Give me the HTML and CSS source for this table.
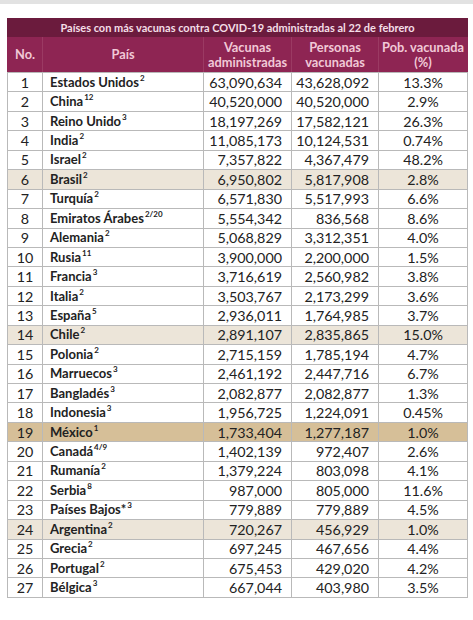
FILE: index.html
```html
<!DOCTYPE html>
<html lang="es">
<head>
<meta charset="utf-8">
<link rel="stylesheet" href="styles.css">
</head>
<body>
<div class="topband"></div>
<table class="vac">
  <colgroup>
    <col class="c-no"><col class="c-pais"><col class="c-vac"><col class="c-per"><col class="c-pob">
  </colgroup>
  <thead>
    <tr class="title"><th colspan="5">Países con más vacunas contra COVID-19 administradas al 22 de febrero</th></tr>
    <tr class="head">
      <th>No.</th><th>País</th><th>Vacunas<br>administradas</th><th>Personas<br>vacunadas</th><th>Pob. vacunada<br>(%)</th>
    </tr>
  </thead>
  <tbody>
    <tr><td class="no">1</td><td class="pais">Estados Unidos<sup>2</sup></td><td class="num">63,090,634</td><td class="num">43,628,092</td><td class="pct">13.3%</td></tr>
    <tr><td class="no">2</td><td class="pais">China<sup>12</sup></td><td class="num">40,520,000</td><td class="num">40,520,000</td><td class="pct">2.9%</td></tr>
    <tr><td class="no">3</td><td class="pais">Reino Unido<sup>3</sup></td><td class="num">18,197,269</td><td class="num">17,582,121</td><td class="pct">26.3%</td></tr>
    <tr><td class="no">4</td><td class="pais">India<sup>2</sup></td><td class="num">11,085,173</td><td class="num">10,124,531</td><td class="pct">0.74%</td></tr>
    <tr><td class="no">5</td><td class="pais">Israel<sup>2</sup></td><td class="num">7,357,822</td><td class="num">4,367,479</td><td class="pct">48.2%</td></tr>
    <tr class="hl"><td class="no">6</td><td class="pais">Brasil<sup>2</sup></td><td class="num">6,950,802</td><td class="num">5,817,908</td><td class="pct">2.8%</td></tr>
    <tr><td class="no">7</td><td class="pais">Turquía<sup>2</sup></td><td class="num">6,571,830</td><td class="num">5,517,993</td><td class="pct">6.6%</td></tr>
    <tr><td class="no">8</td><td class="pais">Emiratos Árabes<sup>2/20</sup></td><td class="num">5,554,342</td><td class="num">836,568</td><td class="pct">8.6%</td></tr>
    <tr><td class="no">9</td><td class="pais">Alemania<sup>2</sup></td><td class="num">5,068,829</td><td class="num">3,312,351</td><td class="pct">4.0%</td></tr>
    <tr><td class="no">10</td><td class="pais">Rusia<sup>11</sup></td><td class="num">3,900,000</td><td class="num">2,200,000</td><td class="pct">1.5%</td></tr>
    <tr><td class="no">11</td><td class="pais">Francia<sup>3</sup></td><td class="num">3,716,619</td><td class="num">2,560,982</td><td class="pct">3.8%</td></tr>
    <tr><td class="no">12</td><td class="pais">Italia<sup>2</sup></td><td class="num">3,503,767</td><td class="num">2,173,299</td><td class="pct">3.6%</td></tr>
    <tr><td class="no">13</td><td class="pais">España<sup>5</sup></td><td class="num">2,936,011</td><td class="num">1,764,985</td><td class="pct">3.7%</td></tr>
    <tr class="hl"><td class="no">14</td><td class="pais">Chile<sup>2</sup></td><td class="num">2,891,107</td><td class="num">2,835,865</td><td class="pct">15.0%</td></tr>
    <tr><td class="no">15</td><td class="pais">Polonia<sup>2</sup></td><td class="num">2,715,159</td><td class="num">1,785,194</td><td class="pct">4.7%</td></tr>
    <tr><td class="no">16</td><td class="pais">Marruecos<sup>3</sup></td><td class="num">2,461,192</td><td class="num">2,447,716</td><td class="pct">6.7%</td></tr>
    <tr><td class="no">17</td><td class="pais">Bangladés<sup>3</sup></td><td class="num">2,082,877</td><td class="num">2,082,877</td><td class="pct">1.3%</td></tr>
    <tr><td class="no">18</td><td class="pais">Indonesia<sup>3</sup></td><td class="num">1,956,725</td><td class="num">1,224,091</td><td class="pct">0.45%</td></tr>
    <tr class="mx"><td class="no">19</td><td class="pais">México<sup>1</sup></td><td class="num">1,733,404</td><td class="num">1,277,187</td><td class="pct">1.0%</td></tr>
    <tr><td class="no">20</td><td class="pais">Canadá<sup>4/9</sup></td><td class="num">1,402,139</td><td class="num">972,407</td><td class="pct">2.6%</td></tr>
    <tr><td class="no">21</td><td class="pais">Rumanía<sup>2</sup></td><td class="num">1,379,224</td><td class="num">803,098</td><td class="pct">4.1%</td></tr>
    <tr><td class="no">22</td><td class="pais">Serbia<sup>8</sup></td><td class="num">987,000</td><td class="num">805,000</td><td class="pct">11.6%</td></tr>
    <tr><td class="no">23</td><td class="pais">Países Bajos*<sup>3</sup></td><td class="num">779,889</td><td class="num">779,889</td><td class="pct">4.5%</td></tr>
    <tr class="hl"><td class="no">24</td><td class="pais">Argentina<sup>2</sup></td><td class="num">720,267</td><td class="num">456,929</td><td class="pct">1.0%</td></tr>
    <tr><td class="no">25</td><td class="pais">Grecia<sup>2</sup></td><td class="num">697,245</td><td class="num">467,656</td><td class="pct">4.4%</td></tr>
    <tr><td class="no">26</td><td class="pais">Portugal<sup>2</sup></td><td class="num">675,453</td><td class="num">429,020</td><td class="pct">4.2%</td></tr>
    <tr><td class="no">27</td><td class="pais">Bélgica<sup>3</sup></td><td class="num">667,044</td><td class="num">403,980</td><td class="pct">3.5%</td></tr>
  </tbody>
</table>
</body>
</html>
```

FILE: styles.css
```css
html, body {
  margin: 0;
  padding: 0;
  background: #ffffff;
}
body {
  width: 473px;
  height: 620px;
  overflow: hidden;
  font-family: Lato, "Open Sans", sans-serif;
  color: #222222;
}
.topband {
  height: 4px;
  background: #e2e2e2;
  margin-bottom: 14px;
}
.vac {
  margin-left: 7px;
  width: 460px;
  border-collapse: collapse;
  table-layout: fixed;
}
.c-no { width: 35px; }
.c-pais { width: 161px; }
.c-vac { width: 88px; }
.c-per { width: 87px; }
.c-pob { width: 89px; }

.title th {
  background: #6b1b3d;
  color: #f4dfe7;
  font-weight: 700;
  font-size: 11px;
  height: 18px;
  padding: 0;
  text-align: center;
  line-height: 18px;
  border: 1px solid #6b1b3d;
  border-bottom: 0;
}
.head th {
  background: #8e2553;
  color: #f1c9d7;
  font-weight: 700;
  font-size: 12.8px;
  line-height: 15px;
  height: 35px;
  padding: 0;
  text-align: center;
  border-left: 1px solid #9b3a63;
  border-right: 1px solid #9b3a63;
  border-top: 0;
  border-bottom: 1px solid #b8b8b8;
}
.head th:first-child { border-left-color: #8e2553; }
.head th:last-child { border-right-color: #8e2553; }

tbody td {
  height: 18.44px;
  padding: 0;
  font-size: 14.3px;
  line-height: 17px;
  border: 1px solid #b9b9b9;
  white-space: nowrap;
}
tbody tr.hl td { background: #ece5d9; }
tbody tr.mx td { background: #d6bf98; }
.no { text-align: center; }
.pais {
  font-weight: 700;
  font-size: 13px !important;
  padding-left: 7px !important;
}
.pais sup {
  font-size: 8px;
  line-height: 0;
  vertical-align: 6px;
  margin-left: 1px;
}
.num {
  text-align: right;
  padding-right: 9px !important;
}
.pct { text-align: center; }
```
